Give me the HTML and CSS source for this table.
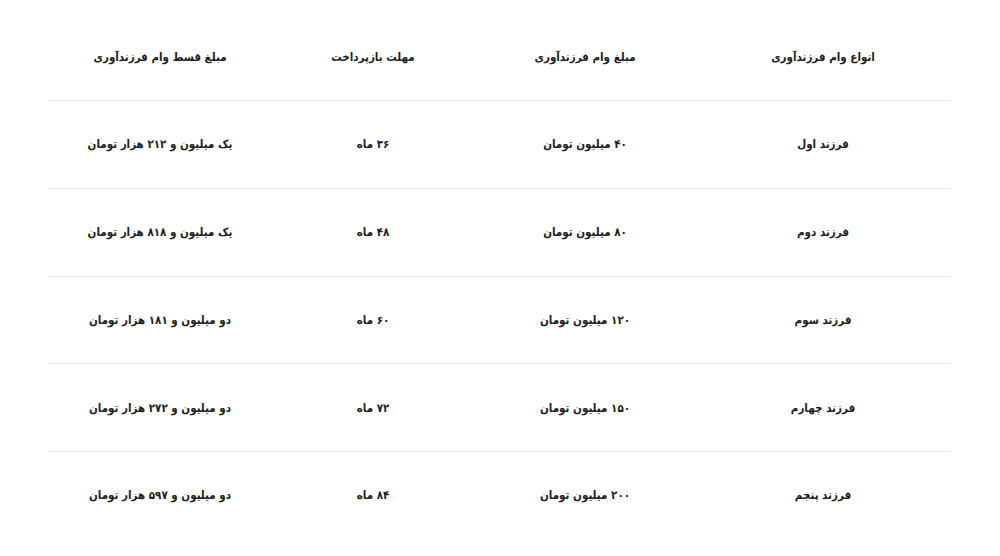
FILE: index.html
```html
<!DOCTYPE html>
<html lang="fa" dir="rtl">
<head>
<meta charset="utf-8">
<link rel="stylesheet" href="styles.css">
</head>
<body>
<div class="wrap">
<table class="loan">
<colgroup>
<col class="c1"><col class="c2"><col class="c3"><col class="c4">
</colgroup>
<thead>
<tr><th>انواع وام فرزندآوری</th><th>مبلغ وام فرزندآوری</th><th>مهلت بازپرداخت</th><th>مبلغ قسط وام فرزندآوری</th></tr>
</thead>
<tbody>
<tr><td>فرزند اول</td><td>۴۰ میلیون تومان</td><td>۳۶ ماه</td><td>یک میلیون و ۲۱۲ هزار تومان</td></tr>
<tr><td>فرزند دوم</td><td>۸۰ میلیون تومان</td><td>۴۸ ماه</td><td>یک میلیون و ۸۱۸ هزار تومان</td></tr>
<tr><td>فرزند سوم</td><td>۱۲۰ میلیون تومان</td><td>۶۰ ماه</td><td>دو میلیون و ۱۸۱ هزار تومان</td></tr>
<tr><td>فرزند چهارم</td><td>۱۵۰ میلیون تومان</td><td>۷۲ ماه</td><td>دو میلیون و ۲۷۲ هزار تومان</td></tr>
<tr><td>فرزند پنجم</td><td>۲۰۰ میلیون تومان</td><td>۸۴ ماه</td><td>دو میلیون و ۵۹۷ هزار تومان</td></tr>
</tbody>
</table>
</div>
</body>
</html>
```
FILE: styles.css
```css
html, body {
  margin: 0;
  padding: 0;
  background: #ffffff;
}
body {
  font-family: "DejaVu Sans Condensed", "DejaVu Sans", sans-serif;
  color: #1e1e1e;
}
.wrap {
  padding: 13px 50px 0 48px;
}
.loan {
  width: 902px;
  border-collapse: collapse;
  table-layout: fixed;
}
.c1 { width: 254px; }
.c2 { width: 222px; }
.c3 { width: 202px; }
.c4 { width: 224px; }
.loan th,
.loan td {
  height: 86.75px;
  padding: 0;
  text-align: center;
  vertical-align: middle;
  font-size: 11.5px;
  font-weight: bold;
}
.loan thead th {
  height: 87px;
}
.loan tbody td {
  border-top: 1px solid #ececec;
}
```
